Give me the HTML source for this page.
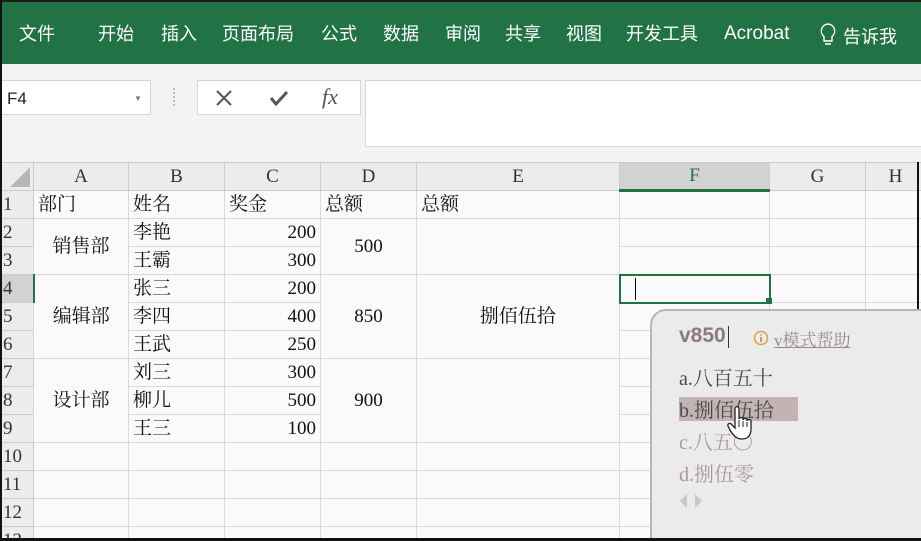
<!DOCTYPE html>
<html><head><meta charset="utf-8"><style>
*{margin:0;padding:0;box-sizing:border-box}
html,body{width:921px;height:541px;overflow:hidden}
body{background:#f3f3f3;position:relative;font-family:"Liberation Serif","Noto Serif CJK SC",serif}
.rib{position:absolute;left:0;top:0;width:921px;height:64px;background:#217346;border-top:2px solid #1d1d1d}
.rib span{position:absolute;top:18px;line-height:28px;color:#fff;font:18px/28px "Liberation Sans","Noto Sans CJK SC",sans-serif}
.a{position:absolute}
table{position:absolute;left:0;top:162px;border-collapse:collapse;table-layout:fixed;background:#fafafa;width:925px;min-width:925px}
td{border:1px solid #d9d9d9;height:28px;font-size:19px;color:#111;padding:0 4px;white-space:nowrap;line-height:26px;overflow:hidden}
tr.h td{height:27px;background:#ececec;text-align:center;color:#333;font-size:19px;border-color:#ccc}
td.rh{background:#ececec;color:#333;padding:0 0 0 2px;text-align:left;border-color:#ccc}
.c{text-align:center}.r{text-align:right}
</style></head><body>
<div class="rib">
<span style="left:19px">文件</span><span style="left:98px">开始</span><span style="left:161px">插入</span><span style="left:222px">页面布局</span><span style="left:321px">公式</span><span style="left:383px">数据</span><span style="left:445px">审阅</span><span style="left:505px">共享</span><span style="left:566px">视图</span><span style="left:626px">开发工具</span><span style="left:724px;font-size:19px">Acrobat</span>
<span style="left:843px;top:21px">告诉我</span>
</div>
<svg class="a" style="left:818px;top:22px" width="20" height="26"><path d="M10 2a7 7 0 0 0-4 12.5V19h8v-4.5A7 7 0 0 0 10 2z M7 22h6" stroke="#fff" stroke-width="1.4" fill="none"/></svg>
<div class="a" style="left:0;top:80px;width:151px;height:35px;background:#fff;border:1px solid #d6d6d6;font:17px 'Liberation Sans',sans-serif;padding:8px 6px;color:#222">F4</div>
<div class="a" style="left:134px;top:94px;font-size:8px;color:#777">▼</div>
<div class="a" style="left:173px;top:88px;width:2px;height:18px;border-left:2px dotted #bbb"></div>
<div class="a" style="left:197px;top:80px;width:164px;height:35px;background:#fff;border:1px solid #d6d6d6"></div>
<svg class="a" style="left:214px;top:88px" width="20" height="20"><path d="M3 3L17 17M17 3L3 17" stroke="#555" stroke-width="2"/></svg>
<svg class="a" style="left:268px;top:88px" width="22" height="20"><path d="M3 10L8 16L19 4" stroke="#555" stroke-width="3" fill="none"/></svg>
<div class="a" style="left:322px;top:84px;font:italic 22px 'Liberation Serif',serif;color:#555">fx</div>
<div class="a" style="left:365px;top:80px;width:560px;height:67px;background:#fff;border:1px solid #d6d6d6"></div>
<table>
<colgroup><col style="width:33px"><col style="width:95px"><col style="width:96px"><col style="width:96px"><col style="width:96px"><col style="width:203px"><col style="width:150px"><col style="width:96px"><col style="width:60px"></colgroup>
<tr class="h"><td style="position:relative"><svg style="position:absolute;right:3px;bottom:3px" width="20" height="20"><path d="M20 0L20 20L0 20Z" fill="#b7b7b7"/></svg></td><td>A</td><td>B</td><td>C</td><td>D</td><td>E</td><td style="background:#d2d2d2;border-bottom:3px solid #217346;color:#217346">F</td><td>G</td><td>H</td></tr>
<tr><td class="rh">1</td><td>部门</td><td>姓名</td><td>奖金</td><td>总额</td><td>总额</td><td></td><td></td><td></td></tr>
<tr><td class="rh">2</td><td rowspan="2" class="c">销售部</td><td>李艳</td><td class="r">200</td><td rowspan="2" class="c">500</td><td rowspan="2"></td><td></td><td></td><td></td></tr>
<tr><td class="rh">3</td><td>王霸</td><td class="r">300</td><td></td><td></td><td></td></tr>
<tr><td class="rh" style="border-right:2px solid #217346;background:#d2d2d2">4</td><td rowspan="3" class="c">编辑部</td><td>张三</td><td class="r">200</td><td rowspan="3" class="c">850</td><td rowspan="3" class="c">捌佰伍拾</td><td style="border:2px solid #217346;position:relative"><div style="position:absolute;left:14px;top:2px;width:1px;height:22px;background:#000"></div></td><td></td><td></td></tr>
<tr><td class="rh">5</td><td>李四</td><td class="r">400</td><td></td><td></td><td></td></tr>
<tr><td class="rh">6</td><td>王武</td><td class="r">250</td><td></td><td></td><td></td></tr>
<tr><td class="rh">7</td><td rowspan="3" class="c">设计部</td><td>刘三</td><td class="r">300</td><td rowspan="3" class="c">900</td><td rowspan="3"></td><td></td><td></td><td></td></tr>
<tr><td class="rh">8</td><td>柳儿</td><td class="r">500</td><td></td><td></td><td></td></tr>
<tr><td class="rh">9</td><td>王三</td><td class="r">100</td><td></td><td></td><td></td></tr>
<tr><td class="rh">10</td><td></td><td></td><td></td><td></td><td></td><td></td><td></td><td></td></tr>
<tr><td class="rh">11</td><td></td><td></td><td></td><td></td><td></td><td></td><td></td><td></td></tr>
<tr><td class="rh">12</td><td></td><td></td><td></td><td></td><td></td><td></td><td></td><td></td></tr>
<tr><td class="rh">13</td><td></td><td></td><td></td><td></td><td></td><td></td><td></td><td></td></tr>
</table>
<div class="a" style="left:766px;top:298px;width:6px;height:6px;background:#217346"></div>
<div class="a" style="left:0;top:0;width:2px;height:541px;background:#111"></div>
<div class="a" style="left:917px;top:162px;width:2px;height:379px;background:#111"></div>
<div class="a" style="left:650px;top:309px;width:280px;height:240px;background:#ebebeb;border:2px solid #bfb0b1;border-top-left-radius:16px"></div>
<div class="a" style="left:0;top:538px;width:921px;height:3px;background:#111"></div>
<div class="a" style="left:679px;top:324px;font:bold 21px 'Liberation Sans',sans-serif;color:#8a7b7c">v850</div>
<div class="a" style="left:728px;top:326px;width:1px;height:22px;background:#333"></div>
<svg class="a" style="left:753px;top:330px" width="16" height="16"><circle cx="8" cy="8" r="6.5" stroke="#e0a040" stroke-width="1.5" fill="none"/><path d="M8 7v5M8 4.5v1" stroke="#c08040" stroke-width="1.6"/></svg>
<div class="a" style="left:774px;top:326px;font-size:17px;color:#9a8a8b;text-decoration:underline">v模式帮助</div>
<div class="a" style="left:679px;top:362px;font-size:20px;color:#4a4a4a">a.八百五十</div>
<div class="a" style="left:679px;top:397px;width:119px;height:24px;background:#c3b3b4"></div>
<div class="a" style="left:679px;top:394px;font-size:20px;color:#4a4a4a">b.捌佰伍拾</div>
<div class="a" style="left:679px;top:426px;font-size:20px;color:#a89a9b">c.八五〇</div>
<div class="a" style="left:679px;top:458px;font-size:20px;color:#a89a9b">d.捌伍零</div>
<svg class="a" style="left:679px;top:492px" width="30" height="18"><path d="M8 2L1 9L8 16Z M16 2L23 9L16 16Z" fill="#c8c8c8"/></svg>
<svg class="a" style="left:726px;top:406px" width="28" height="36"><path d="M9 3c0-3 4-3 4 0v10c0-2 4-2 4 0v1c0-2 4-2 4 0v1c0-2 4-2 4 0v8c0 6-3 10-9 10s-9-4-12-9l-2-4c-1-2 2-4 4-1l3 3V3z" fill="#fff" stroke="#222" stroke-width="1.3"/><path d="M13 14v7M17 15v6M21 16v5" stroke="#222" stroke-width="1"/></svg>
</body></html>
